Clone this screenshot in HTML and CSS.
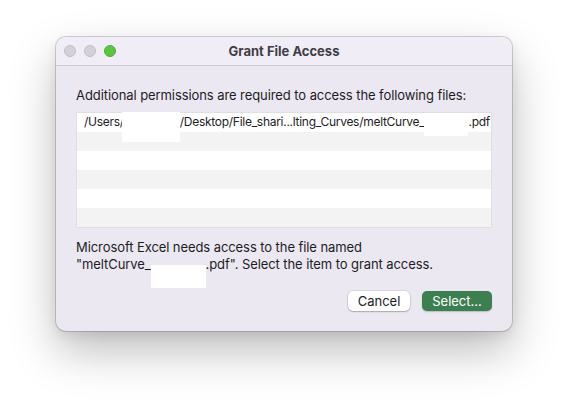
FILE: index.html
```html
<!DOCTYPE html>
<html>
<head>
<meta charset="utf-8">
<link rel="stylesheet" href="styles.css">
</head>
<body>
<div class="stage">
  <div class="window">
    <div class="titlebar">
      <div class="lights">
        <span class="light grey"></span>
        <span class="light grey"></span>
        <span class="light green"></span>
      </div>
      <div class="title">Grant File Access</div>
    </div>
    <div class="content">
      <p class="intro">Additional permissions are required to access the following files:</p>
      <div class="table">
        <div class="row"><span class="path">/Users/<span class="redact r1"></span>/Desktop/File_shari...lting_Curves/meltCurve_<span class="redact r2"></span>.pdf</span></div>
        <div class="row alt"></div>
        <div class="row"></div>
        <div class="row alt"></div>
        <div class="row"></div>
        <div class="row alt"></div>
      </div>
      <p class="message">Microsoft Excel needs access to the file named<br>"meltCurve_<span class="redact r3"></span>.pdf". Select the item to grant access.</p>
      <div class="buttons">
        <button class="btn cancel">Cancel</button>
        <button class="btn select">Select...</button>
      </div>
    </div>
  </div>
</div>
</body>
</html>
```
FILE: styles.css
```css
* { box-sizing: border-box; }
html, body { margin: 0; padding: 0; }
body {
  width: 568px;
  height: 405px;
  background: #ffffff;
  font-family: "Inter", "Liberation Sans", sans-serif;
  color: #1d1d1f;
  overflow: hidden;
}
.stage {
  display: flex;
  justify-content: center;
  padding-top: 37px;
}
.window {
  width: 456px;
  height: 294px;
  border-radius: 10px;
  background: #ece8f2;
  box-shadow: 0 0 0 1px rgba(0,0,0,0.16), 0 20px 45px rgba(0,0,0,0.26), 0 4px 12px rgba(0,0,0,0.08);
  overflow: hidden;
  display: flex;
  flex-direction: column;
}
.titlebar {
  height: 29px;
  flex: none;
  background: #f1edf6;
  border-bottom: 1px solid #cfcbd4;
  display: flex;
  align-items: center;
  position: relative;
}
.lights {
  display: flex;
  gap: 8px;
  padding-left: 8px;
}
.light {
  width: 12px;
  height: 12px;
  border-radius: 50%;
  display: block;
}
.light.grey { background: #d3d0d8; border: 0.5px solid #c3bfc8; }
.light.green { background: #5ac53f; border: 0.5px solid #4fae37; }
.title {
  position: absolute;
  left: 0;
  right: 0;
  text-align: center;
  font-weight: 700;
  font-size: 13px;
  color: #403d45;
}
.content {
  padding: 20px 20px 0 20px;
  display: flex;
  flex-direction: column;
}
.intro {
  margin: 0;
  font-size: 13px;
  line-height: 17px;
  letter-spacing: -0.08px;
  padding-top: 1px;
}
.table {
  margin-top: 8px;
  width: 416px;
  border: 1px solid #e0dde4;
  background: #ffffff;
}
.row {
  height: 19px;
  background: #ffffff;
}
.row.alt { background: #f3f3f4; }
.path {
  display: block;
  padding-left: 7px;
  font-size: 12px;
  letter-spacing: -0.28px;
  line-height: 17px;
  white-space: nowrap;
}
.redact {
  display: inline-block;
  position: relative;
  height: 1px;
  vertical-align: baseline;
}
.redact::after {
  content: "";
  position: absolute;
  left: 0;
  right: 0;
  background: #ffffff;
}
.r1 { width: 56px; }
.r1::after { top: -13px; height: 30px; left: -2px; right: 0; }
.r2 { width: 44px; }
.r2::after { top: -1px; height: 12px; }
.r3 { width: 55px; }
.r3::after { top: -3px; height: 23px; }
.message {
  margin: 11px 0 0 0;
  font-size: 13px;
  line-height: 17px;
  letter-spacing: -0.08px;
}
.buttons {
  display: flex;
  justify-content: flex-end;
  gap: 12px;
  margin-top: 18px;
}
.btn {
  height: 20px;
  font-family: inherit;
  font-size: 13px;
  border-radius: 5px;
  padding: 0;
  line-height: 20px;
}
.cancel {
  width: 62px;
  background: #ffffff;
  color: #1d1d1f;
  border: none;
  box-shadow: 0 0 0 0.5px rgba(0,0,0,0.15), 0 1px 1.5px rgba(0,0,0,0.22);
}
.select {
  width: 70px;
  background: #3e7f51;
  color: #ffffff;
  border: none;
  box-shadow: 0 1px 1.5px rgba(0,0,0,0.2);
}
```
